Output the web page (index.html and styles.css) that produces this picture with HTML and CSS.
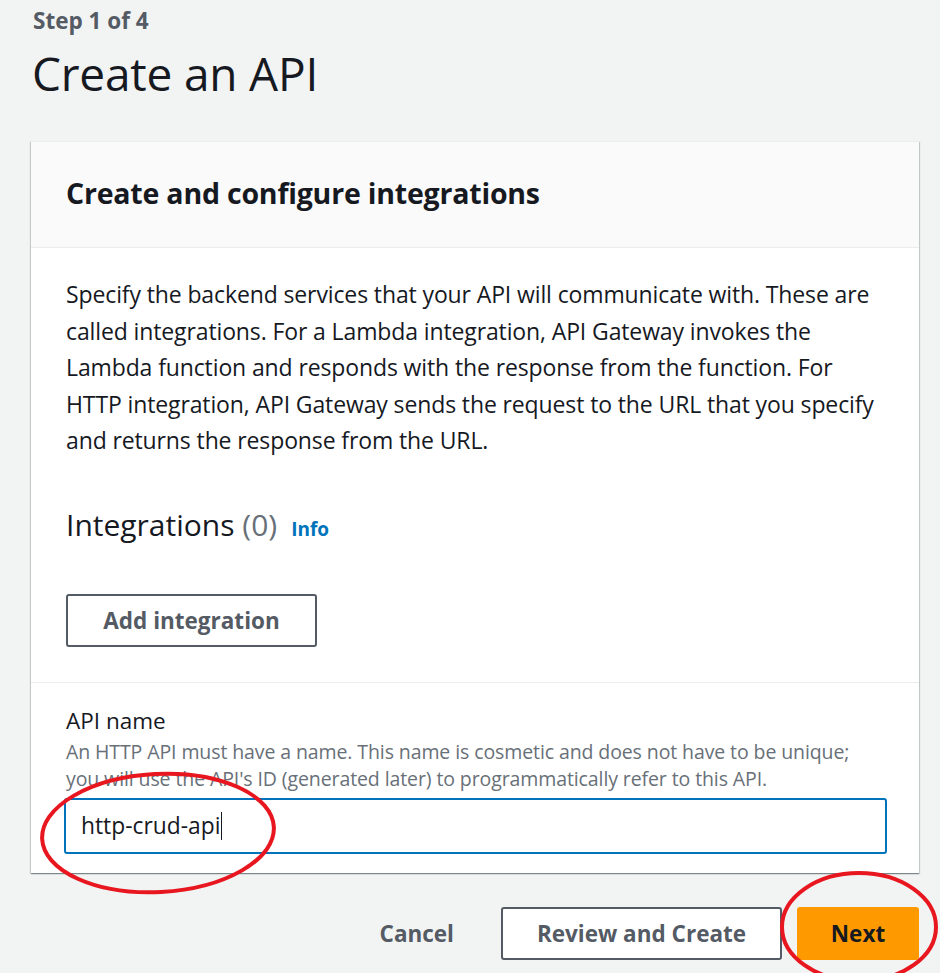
FILE: index.html
```html
<!DOCTYPE html>
<html>
<head>
<meta charset="utf-8">
<link rel="stylesheet" href="styles.css">
</head>
<body>
<div class="page">
  <div class="step">Step 1 of 4</div>
  <h1 class="title">Create an API</h1>
  <div class="card">
    <div class="card-header">
      <h2>Create and configure integrations</h2>
    </div>
    <div class="card-body">
      <p class="desc">Specify the backend services that your API will communicate with. These are called integrations. For a Lambda integration, API Gateway invokes the Lambda function and responds with the response from the function. For HTTP integration, API Gateway sends the request to the URL that you specify and returns the response from the URL.</p>
      <div class="int-head">
        <span class="int-title">Integrations <span class="count">(0)</span></span>
        <a class="info">Info</a>
      </div>
      <button class="btn btn-normal add-btn">Add integration</button>
    </div>
    <div class="card-field">
      <div class="label">API name</div>
      <div class="hint">An HTTP API must have a name. This name is cosmetic and does not have to be unique; you will use the API's ID (generated later) to programmatically refer to this API.</div>
      <div class="input"><span>http-crud-api</span><span class="caret"></span></div>
    </div>
  </div>
  <div class="actions">
    <button class="btn btn-link">Cancel</button>
    <button class="btn btn-normal review">Review and Create</button>
    <button class="btn btn-primary">Next</button>
  </div>
</div>
<svg class="annot" width="940" height="973" viewBox="0 0 940 973">
  <ellipse cx="158" cy="833" rx="116" ry="59" transform="rotate(-3 158 833)" fill="none" stroke="#e8161f" stroke-width="4"/>
  <ellipse cx="859" cy="927" rx="77" ry="54" fill="none" stroke="#e8161f" stroke-width="4"/>
</svg>
</body>
</html>
```
FILE: styles.css
```css
html, body {
  margin: 0;
  padding: 0;
}
body {
  background: #f2f3f3;
  font-family: "Open Sans", "Noto Sans", sans-serif;
  color: #16191f;
  width: 940px;
  height: 973px;
  overflow: hidden;
  position: relative;
}
.page {
  padding: 6px 21px 0 31px;
}
.step {
  font-weight: 700;
  font-size: 22.5px;
  line-height: 30px;
  color: #545b64;
  padding-left: 2px;
}
.title {
  margin: 10px 0 0 0;
  font-weight: 400;
  font-size: 46px;
  line-height: 54px;
  padding-left: 1px;
  letter-spacing: -0.2px;
}
.card {
  margin-top: 41px;
  background: #fff;
  box-shadow: 0 1px 1px 0 rgba(0,28,36,.3), 1px 1px 1px 0 rgba(0,28,36,.15), -1px 1px 1px 0 rgba(0,28,36,.15);
  border-top: 1px solid #eaeded;
}
.card-header {
  background: #fafafa;
  border-bottom: 1px solid #eaeded;
  height: 105px;
  display: flex;
  align-items: center;
  padding: 0 35px;
}
.card-header h2 {
  margin: 0;
  font-size: 28.5px;
  font-weight: 700;
  letter-spacing: -0.2px;
  position: relative;
  top: -2px;
}
.card-body {
  padding: 28px 35px 35px 35px;
  border-bottom: 1px solid #eaeded;
}
.desc {
  margin: 0;
  font-size: 23px;
  line-height: 36.6px;
  letter-spacing: -0.12px;
}
.int-head {
  margin-top: 46px;
  display: flex;
  align-items: baseline;
  gap: 14px;
}
.int-title {
  font-size: 30px;
  line-height: 40px;
}
.count {
  color: #687078;
}
.info {
  color: #0073bb;
  font-weight: 700;
  font-size: 19px;
}
.btn {
  font-family: inherit;
  font-weight: 700;
  font-size: 22.5px;
  border-radius: 3px;
  cursor: pointer;
  box-sizing: border-box;
}
.btn-normal {
  background: #fff;
  border: 2px solid #545b64;
  color: #545b64;
  height: 53px;
}
.add-btn {
  margin-top: 49px;
  width: 251px;
  display: block;
}
.card-field {
  padding: 23px 33px 19px 33px;
}
.label {
  font-size: 22.5px;
  line-height: 30px;
  padding-left: 2px;
}
.hint {
  font-size: 19.5px;
  line-height: 27px;
  color: #687078;
  padding-left: 2px;
  margin-top: 2px;
  letter-spacing: -0.1px;
}
.input {
  margin-top: 6px;
  height: 56px;
  box-sizing: border-box;
  border: 2px solid #0073bb;
  border-radius: 3px;
  display: flex;
  align-items: center;
  padding-left: 15px;
  font-size: 22.8px;
  width: 823px;
}
.caret {
  display: inline-block;
  width: 1px;
  height: 28px;
  background: #16191f;
  margin-left: 1px;
}
.actions {
  display: flex;
  justify-content: flex-end;
  align-items: center;
  margin-top: 34px;
  gap: 15px;
}
.btn-link {
  background: none;
  border: none;
  color: #545b64;
  height: 53px;
  padding: 0 32px 0 0;
}
.review {
  width: 281px;
}
.btn-primary {
  background: #ff9900;
  border: 2px solid #ff9900;
  color: #16191f;
  height: 53px;
  width: 122px;
}
.annot {
  position: absolute;
  left: 0;
  top: 0;
  pointer-events: none;
}
```
